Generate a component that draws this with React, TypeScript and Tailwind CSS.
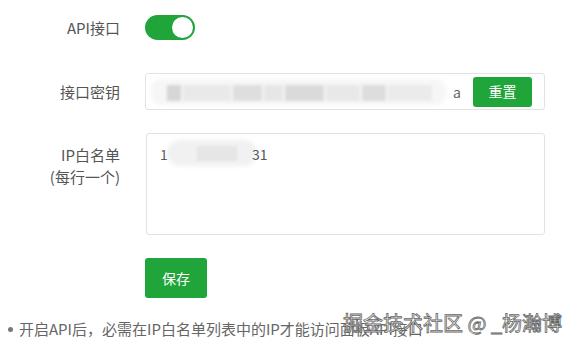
import React from "react";

const font = { fontFamily: '"Noto Sans CJK SC", "Noto Sans", sans-serif' };

export default function App() {
  return (
    <div
      className="relative w-[579px] h-[347px] overflow-hidden bg-white text-[#555]"
      style={font}
    >
      <div className="flex flex-col pt-[15px]">
        {/* API switch row */}
        <div className="flex items-center h-[24px]">
          <div className="w-[120px] text-right text-[15px] leading-none">API接口</div>
          <div className="ml-[25px] w-[50px] h-[25px] rounded-full bg-[#20a53a] flex items-center justify-end pr-[2px]">
            <div className="w-[21px] h-[21px] rounded-full bg-white" />
          </div>
        </div>

        {/* key row */}
        <div className="flex items-center mt-[34px] h-[37px]">
          <div className="w-[120px] text-right text-[15px] leading-none">接口密钥</div>
          <div className="ml-[25px] w-[400px] h-[37px] rounded-[3px] border border-[#e2e2e2] flex items-center pl-[5px] pr-[12px]">
            <div className="relative w-[300px] h-[26px] flex items-center">
              <div className="absolute left-0 top-0 w-[295px] h-[26px] rounded-[10px] bg-[#f6f6f6] blur-[2px]" />
              <div className="absolute left-[16px] top-[6px] w-[265px] h-[16px] flex gap-[2px] blur-[1.5px]">
                <div className="w-[14px] bg-[#d6d6d6]" />
                <div className="w-[50px] bg-[#e9e9e9]" />
                <div className="w-[30px] bg-[#dedede]" />
                <div className="w-[20px] bg-[#e6e6e6]" />
                <div className="w-[40px] bg-[#dadada]" />
                <div className="w-[35px] bg-[#e8e8e8]" />
                <div className="w-[25px] bg-[#dddddd]" />
                <div className="w-[45px] bg-[#ebebeb]" />
              </div>
              <span className="absolute left-[302px] top-[3px] text-[14px] text-[#666]">a</span>
            </div>
            <div className="ml-auto w-[59px] h-[30px] rounded-[3px] bg-[#20a53a] text-white text-[14px] flex items-center justify-center">
              重置
            </div>
          </div>
        </div>

        {/* IP whitelist */}
        <div className="flex items-start mt-[23px]">
          <div className="w-[120px] text-right text-[15px] leading-[22px] pt-[11px]">
            <div>IP白名单</div>
            <div>(每行一个)</div>
          </div>
          <div className="ml-[26px] w-[399px] h-[102px] rounded-[3px] border border-[#e2e2e2] relative">
            <div className="absolute left-[13px] top-[10px] text-[14px] text-[#555] leading-[20px]">1</div>
            <div className="absolute left-[20px] top-[6px] w-[90px] h-[26px] rounded-full bg-[#f1f1f1] blur-[2px]" />
            <div className="absolute left-[50px] top-[12px] w-[40px] h-[15px] bg-[#e6e6e6] blur-[1px]" />
            <div className="absolute left-[105px] top-[10px] text-[14px] text-[#555] leading-[20px]">31</div>
          </div>
        </div>

        {/* save */}
        <div className="flex mt-[23px]">
          <div className="ml-[145px] w-[62px] h-[40px] rounded-[3px] bg-[#20a53a] text-white text-[14px] flex items-center justify-center">
            保存
          </div>
        </div>

        {/* tip */}
        <div className="flex items-center mt-[20px] pl-[8px] text-[15px] text-[#666]">
          <div className="w-[5px] h-[5px] rounded-full bg-[#777]" />
          <span className="ml-[6px]">开启API后，必需在IP白名单列表中的IP才能访问面板API接口</span>
        </div>
      </div>

      {/* watermark */}
      <div className="absolute left-[343px] top-[309px] text-[20px] leading-[28px] text-white [-webkit-text-stroke:0.8px_#666] whitespace-nowrap">
        掘金技术社区 @ _杨瀚博
      </div>
    </div>
  );
}
